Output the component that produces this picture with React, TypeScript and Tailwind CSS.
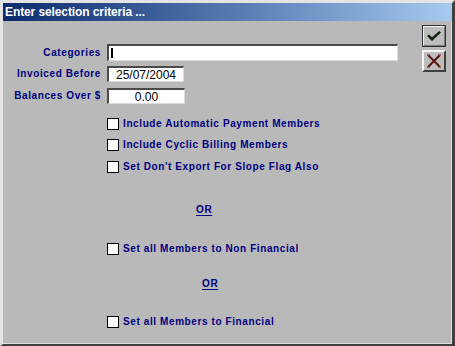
import React from "react";

const label = "font-['Liberation_Sans',Arial,sans-serif] font-bold text-[10px] tracking-[0.6px] text-[#000080] leading-none";

function Field({ title, width, height, value, cursor }: { title: string; width: string; height: string; value?: string; cursor?: boolean }) {
    return (
        <div className={`flex items-center ${height}`}>
            <div className={`w-[98px] text-right ${label}`}>{title}</div>
            <div
                className={`ml-[6px] ${width} h-full bg-white border-t-2 border-l-2 border-t-[#4a4a4a] border-l-[#4a4a4a] border-b border-r border-b-[#dcdcdc] border-r-[#dcdcdc] flex items-center justify-center font-['Liberation_Sans',Arial,sans-serif] text-[12px] text-black leading-none`}
            >
                {cursor ? <div className="mr-auto ml-[2px] w-[2px] h-[10px] bg-black" /> : value}
            </div>
        </div>
    );
}

function Check({ text, className }: { text: string; className: string }) {
    return (
        <div className={`flex items-center h-[12px] pl-[104px] ${className}`}>
            <div className="w-[12px] h-[12px] bg-white border border-black" />
            <span className={`ml-[4px] ${label}`}>{text}</span>
        </div>
    );
}

export default function App() {
    return (
        <div className="w-[455px] h-[346px] flex flex-col bg-[#b9b9b9] border-t-[3px] border-l-[3px] border-t-[#e4e4e4] border-l-[#e4e4e4] border-r-[3px] border-b-2 border-r-[#404040] border-b-[#404040]">
            {/* title bar */}
            <div className="h-[18px] shrink-0 flex items-center pl-[2px] bg-gradient-to-r from-[#0c2a6e] to-[#a6caf0]">
                <span className="font-['Liberation_Sans',Arial,sans-serif] font-bold text-[12px] tracking-[-0.1px] text-white leading-none">
                    Enter selection criteria ...
                </span>
            </div>

            <div className="flex-1 flex border-r border-b border-r-[#dedede] border-b-[#dedede]">
                <div className="flex-1 flex flex-col pt-[23px]">
                    <Field title="Categories" width="w-[291px]" height="h-[17px]" cursor />
                    <div className="mt-[5px]">
                        <Field title="Invoiced Before" width="w-[77px]" height="h-[16px]" value="25/07/2004" />
                    </div>
                    <div className="mt-[6px]">
                        <Field title="Balances Over $" width="w-[78px]" height="h-[16px]" value="0.00" />
                    </div>

                    <Check className="mt-[14px]" text="Include Automatic Payment Members" />
                    <Check className="mt-[9px]" text="Include Cyclic Billing Members" />
                    <Check className="mt-[10px]" text="Set Don't Export For Slope Flag Also" />

                    <div className="mt-[30px] h-[14px] flex items-center pl-[193px]">
                        <span className={`${label} underline underline-offset-2`}>OR</span>
                    </div>

                    <Check className="mt-[26px]" text="Set all Members to Non Financial" />

                    <div className="mt-[22px] h-[14px] flex items-center pl-[199px]">
                        <span className={`${label} underline underline-offset-2`}>OR</span>
                    </div>

                    <Check className="mt-[25px]" text="Set all Members to Financial" />
                </div>

                {/* OK / Cancel */}
                <div className="flex flex-col gap-[3px] pt-[4px] pr-[5px]">
                    <button className="w-[24px] h-[22px] border border-[#303030] bg-[#bdbdbd]">
                        <div className="w-full h-full flex items-center justify-center border-t border-l border-t-[#f4f4f4] border-l-[#f4f4f4] border-b border-r border-b-[#7a7a7a] border-r-[#7a7a7a]">
                            <svg width="14" height="10" viewBox="0 0 14 10">
                                <path d="M0 5 L2 3.5 L5 6.3 L12.3 0 L14 1.4 L5 10 Z" fill="#0e200e" />
                            </svg>
                        </div>
                    </button>
                    <button className="w-[24px] h-[22px] flex items-center justify-center bg-[#bdbdbd] border-2 border-t-[#f4f4f4] border-l-[#f4f4f4] border-r-[#404040] border-b-[#404040]">
                        <svg width="14" height="14" viewBox="0 0 14 14">
                            <path d="M1.5 1.5 L12.5 12.5 M12.5 1.5 L1.5 12.5" stroke="#5a1410" strokeWidth="2" />
                            <path d="M0 1 L3 1 M11 1 L14 1 M0 13 L3 13 M11 13 L14 13" stroke="#5a1410" strokeWidth="1" />
                        </svg>
                    </button>
                </div>
            </div>
        </div>
    );
}
